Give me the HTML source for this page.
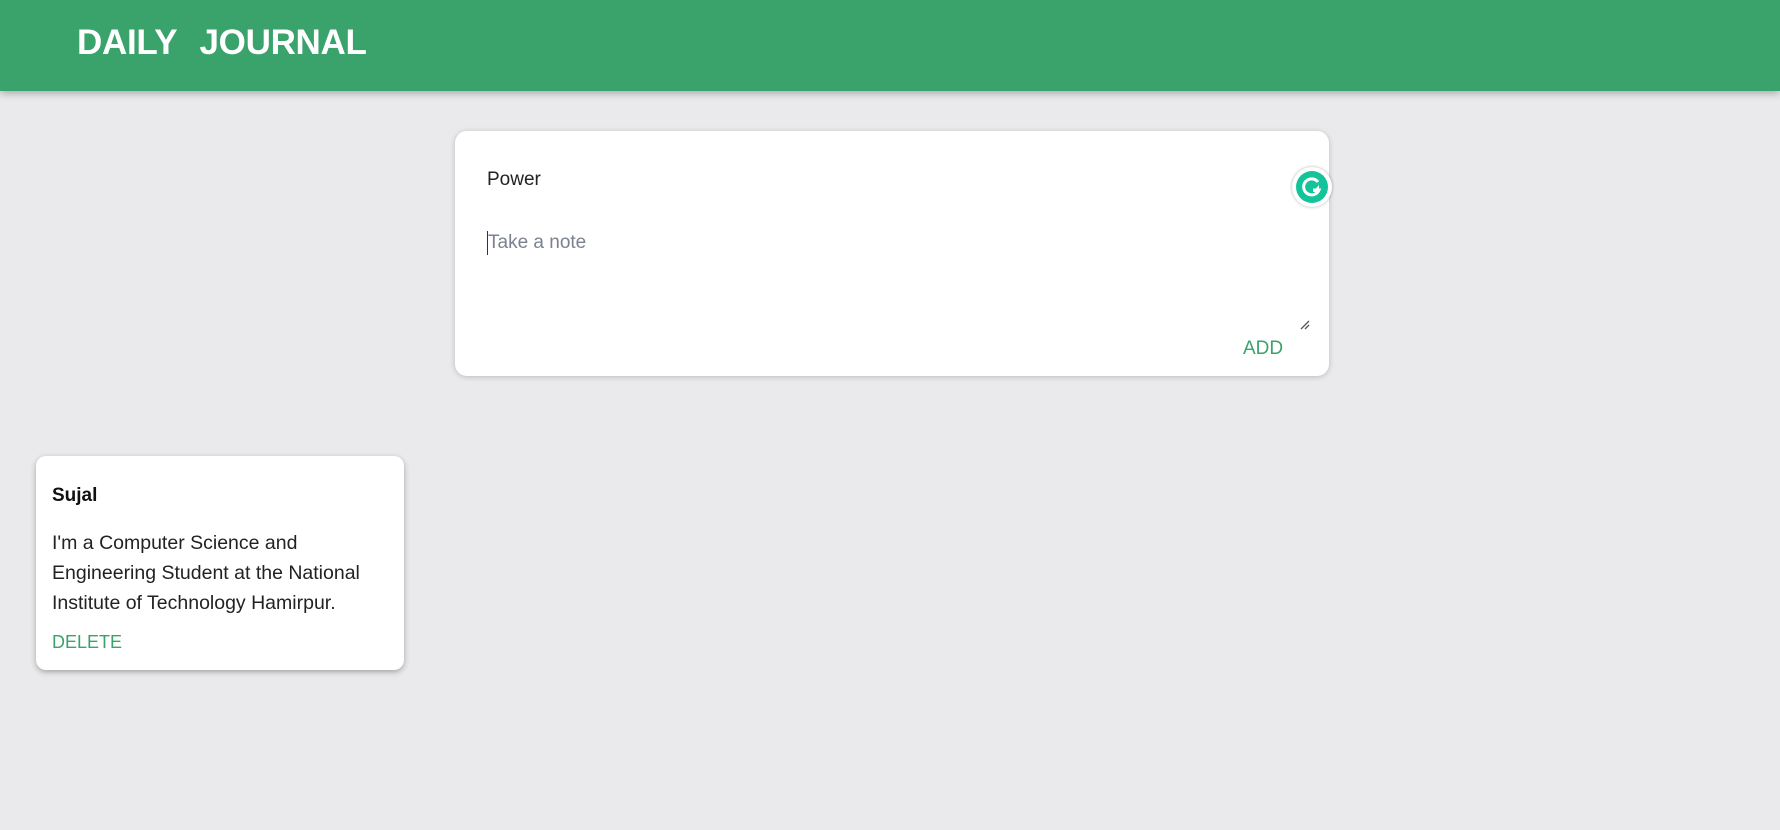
<!DOCTYPE html>
<html><head><style>
body{margin:0;width:1780px;height:830px;background:#eaeaec;font-family:"Liberation Sans",sans-serif;position:relative;overflow:hidden}
header{position:absolute;left:0;top:0;width:1780px;height:91px;background:#39a36b;box-shadow:0 2px 8px rgba(0,0,0,.3)}
header h1{position:absolute;left:77px;top:23px;margin:0;color:#fff;font-size:35px;font-weight:bold;letter-spacing:-.3px;word-spacing:2px}
.form{position:absolute;left:455px;top:131px;width:874px;height:245px;background:#fff;border-radius:12px;box-shadow:0 1px 6px rgba(0,0,0,.2)}
.t{position:absolute;font-size:19px}
.del,.add{color:#39a36b}
.note{position:absolute;left:36px;top:456px;width:368px;height:214px;background:#fff;border-radius:10px;box-shadow:0 2px 6px rgba(0,0,0,.3)}
.g{position:absolute;left:1292px;top:167px;width:40px;height:40px;border-radius:50%;background:#fff;box-shadow:0 0 3px rgba(0,0,0,.3)}
</style></head><body>
<header><h1>DAILY &nbsp;JOURNAL</h1></header>
<div class="form">
<div class="t" style="left:32px;top:38px;color:#222">Power</div>
<div style="position:absolute;left:32px;top:100px;width:1px;height:24px;background:#333"></div>
<div class="t" style="left:33px;top:101px;color:#7a8290">Take a note</div>
<svg style="position:absolute;left:844px;top:188px" width="12" height="12"><path d="M2 10L10 2M6 10L10 6" stroke="#555" stroke-width="1.3"/></svg>
<div class="t add" style="left:788px;top:207px">ADD</div>
</div>
<div class="g"><div style="position:absolute;left:4px;top:4px;width:32px;height:32px;border-radius:50%;background:#15c39a"></div>
<svg style="position:absolute;left:4px;top:4px" width="32" height="32"><path d="M22 11A8 8 0 1 0 23 19H17" fill="none" stroke="#fff" stroke-width="3"/><path d="M23 14v7h-6z" fill="#fff"/></svg></div>
<div class="note">
<div class="t" style="left:16px;top:29px;font-weight:bold;color:#111">Sujal</div>
<div class="t" style="left:16px;top:72px;width:345px;line-height:30px;color:#222;font-size:19.5px">I'm a Computer Science and Engineering Student at the National Institute of Technology Hamirpur.</div>
<div class="t del" style="left:16px;top:176px;font-size:18px">DELETE</div>
</div>
</body></html>
